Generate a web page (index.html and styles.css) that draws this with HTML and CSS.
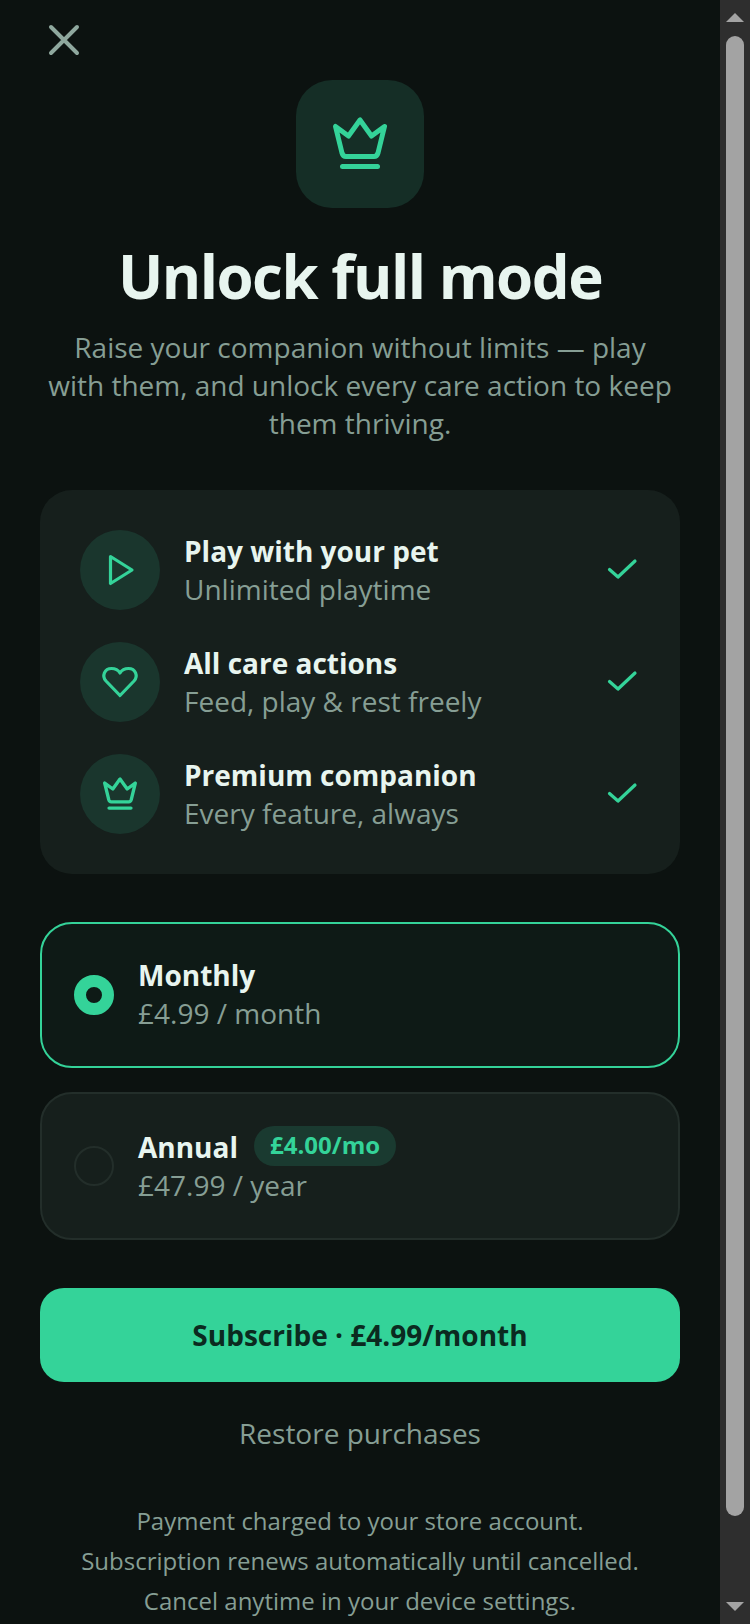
FILE: index.html
```html
<!DOCTYPE html>
<html>
<head>
<title>Unlock full mode</title>
<meta charset="utf-8" />
<link rel="stylesheet" href="styles.css">
</head>
<body>
  <div class="screen">
    <main class="page">
      <button class="close" aria-label="Close">
        <svg width="36" height="36" viewBox="0 0 36 36"><path d="M5 5 L31 31 M31 5 L5 31" fill="none" stroke="#8fa89e" stroke-width="4" stroke-linecap="round"/></svg>
      </button>
      <div class="hero-icon">
        <svg width="64" height="64" viewBox="0 0 64 64" fill="none" stroke="#34d399" stroke-width="5" stroke-linecap="round" stroke-linejoin="round"><path d="M7.500 14.500 L14 41 Q15 44.500 18 44.500 H46 Q49 44.500 50 41 L56.500 14.500 L43.500 24 L32 8 L20.500 24 Z"/><path d="M14.500 54.500 H49.500"/></svg>
      </div>
      <h1 class="title">Unlock full mode</h1>
      <p class="subtitle">Raise your companion without limits — play with them, and unlock every care action to keep them thriving.</p>

      <section class="features">
        <div class="feature">
          <div class="feature-icon">
            <svg width="40" height="40" viewBox="0 0 40 40" fill="none" stroke="#34d399" stroke-width="3.200" stroke-linejoin="round"><path d="M10.500 6.500 L32 20 L10.500 33.500 Z"/></svg>
          </div>
          <div class="text">
            <div class="name">Play with your pet</div>
            <div class="sub">Unlimited playtime</div>
          </div>
          <svg class="check" width="32" height="32" viewBox="0 0 32 32" fill="none" stroke="#34d399" stroke-width="3.200" stroke-linecap="round" stroke-linejoin="round"><path d="M3.500 15.500 L12 23 L29 7"/></svg>
        </div>
        <div class="feature">
          <div class="feature-icon">
            <svg width="40" height="40" viewBox="0 0 40 40" fill="none" stroke="#34d399" stroke-width="3.200" stroke-linejoin="round"><path d="M20 33.500 L6 19 C1.500 14 4.500 6.500 11.500 6.500 C15.500 6.500 18.500 8.500 20 11 C21.500 8.500 24.500 6.500 28.500 6.500 C35.500 6.500 38.500 14 34 19 Z"/></svg>
          </div>
          <div class="text">
            <div class="name">All care actions</div>
            <div class="sub">Feed, play &amp; rest freely</div>
          </div>
          <svg class="check" width="32" height="32" viewBox="0 0 32 32" fill="none" stroke="#34d399" stroke-width="3.200" stroke-linecap="round" stroke-linejoin="round"><path d="M3.500 15.500 L12 23 L29 7"/></svg>
        </div>
        <div class="feature">
          <div class="feature-icon">
            <svg width="40" height="40" viewBox="0 0 64 64" fill="none" stroke="#34d399" stroke-width="5.400" stroke-linecap="round" stroke-linejoin="round"><path d="M7.500 14.500 L14 41 Q15 44.500 18 44.500 H46 Q49 44.500 50 41 L56.500 14.500 L43.500 24 L32 8 L20.500 24 Z"/><path d="M14.500 54.500 H49.500"/></svg>
          </div>
          <div class="text">
            <div class="name">Premium companion</div>
            <div class="sub">Every feature, always</div>
          </div>
          <svg class="check" width="32" height="32" viewBox="0 0 32 32" fill="none" stroke="#34d399" stroke-width="3.200" stroke-linecap="round" stroke-linejoin="round"><path d="M3.500 15.500 L12 23 L29 7"/></svg>
        </div>
      </section>

      <section class="plans">
        <div class="plan plan-active">
          <span class="radio radio-on"></span>
          <div class="text">
            <div class="name">Monthly</div>
            <div class="sub">£4.99 / month</div>
          </div>
        </div>
        <div class="plan">
          <span class="radio"></span>
          <div class="text">
            <div class="name-row">
              <span class="name">Annual</span>
              <span class="badge">£4.00/mo</span>
            </div>
            <div class="sub">£47.99 / year</div>
          </div>
        </div>
      </section>

      <button class="subscribe">Subscribe · £4.99/month</button>
      <div class="restore">Restore purchases</div>
      <p class="legal">Payment charged to your store account.<br>Subscription renews automatically until cancelled.<br>Cancel anytime in your device settings.</p>
    </main>

    <aside class="scrollbar">
      <span class="arrow-up"></span>
      <span class="thumb"></span>
      <span class="arrow-down"></span>
    </aside>
  </div>
</body>
</html>
```
FILE: styles.css
```css
*{
  margin:0;
  padding:0;
  box-sizing:border-box;
}
html,body{
  height:1624px;
  overflow:hidden;
  background:#0c1210;
}
body{
  font-family:"Open Sans","Noto Sans",sans-serif;
  color:#e8f5ef;
}
.screen{
  display:flex;
  height:1624px;
}
.page{
  width:720px;
  flex:none;
  padding:22px 40px 0;
  display:flex;
  flex-direction:column;
  overflow:hidden;
}
.close{
  width:36px;
  height:36px;
  margin-left:6px;
  background:none;
  border:0;
  display:block;
  flex:none;
}
.hero-icon{
  width:128px;
  height:128px;
  flex:none;
  margin:22px auto 0;
  border-radius:36px;
  background:#152e26;
  display:flex;
  align-items:center;
  justify-content:center;
}
.title{
  margin-top:28px;
  font-size:60px;
  line-height:80px;
  font-weight:700;
  text-align:center;
  letter-spacing:-1.5px;
  color:#e8f5ef;
}
.subtitle{
  margin-top:12px;
  padding:0 8px;
  font-size:28px;
  line-height:38px;
  text-align:center;
  color:#869e94;
}
.features{
  margin-top:48px;
  padding:40px;
  height:384px;
  flex:none;
  border-radius:32px;
  background:#161f1c;
  display:flex;
  flex-direction:column;
  gap:32px;
}
.feature{
  display:flex;
  align-items:center;
  gap:24px;
}
.feature-icon{
  width:80px;
  height:80px;
  flex:none;
  border-radius:50%;
  background:#1a362d;
  display:flex;
  align-items:center;
  justify-content:center;
}
.text{
  flex:1;
  min-width:0;
}
.name{
  font-size:28px;
  line-height:38px;
  font-weight:700;
  color:#e8f5ef;
}
.sub{
  font-size:28px;
  line-height:38px;
  color:#869e94;
}
.check{
  flex:none;
  margin-right:2px;
}
.plans{
  margin-top:48px;
  display:flex;
  flex-direction:column;
  gap:24px;
}
.plan{
  height:148px;
  padding:0 32px;
  border-radius:32px;
  border:2px solid #232e2a;
  background:#161f1c;
  display:flex;
  align-items:center;
  gap:24px;
}
.plan .text{
  margin-bottom:2px;
}
.plan-active{
  height:146px;
  border-color:#34d399;
  background:#0e1a16;
}
.radio{
  width:40px;
  height:40px;
  flex:none;
  border-radius:50%;
  border:2px solid #232e2a;
}
.radio-on{
  border:12px solid #34d399;
  background:#0e1a16;
}
.name-row{
  display:flex;
  align-items:center;
  gap:16px;
}
.name-row .name{
  margin-top:2px;
}
.badge{
  height:40px;
  padding:0 16px;
  border-radius:20px;
  background:#1a3a30;
  font-size:24px;
  line-height:38px;
  font-weight:700;
  color:#34d399;
}
.subscribe{
  margin-top:48px;
  height:94px;
  flex:none;
  border:0;
  border-radius:24px;
  background:#34d399;
  font-family:inherit;
  font-size:28px;
  font-weight:700;
  color:#0b2a20;
}
.restore{
  margin-top:31px;
  font-size:28px;
  line-height:40px;
  text-align:center;
  color:#869e94;
}
.legal{
  margin-top:48px;
  font-size:24px;
  line-height:40px;
  text-align:center;
  color:#869e94;
}
.scrollbar{
  width:30px;
  flex:none;
  background:#2e2e2e;
  display:flex;
  flex-direction:column;
  align-items:center;
}
.arrow-up{
  margin-top:13px;
  border-left:9px solid transparent;
  border-right:9px solid transparent;
  border-bottom:9px solid #a3a3a3;
}
.thumb{
  margin-top:14px;
  width:18px;
  height:1480px;
  border-radius:9px;
  background:#a3a3a3;
}
.arrow-down{
  margin-top:auto;
  margin-bottom:13px;
  border-left:9px solid transparent;
  border-right:9px solid transparent;
  border-top:9px solid #a3a3a3;
}
```
